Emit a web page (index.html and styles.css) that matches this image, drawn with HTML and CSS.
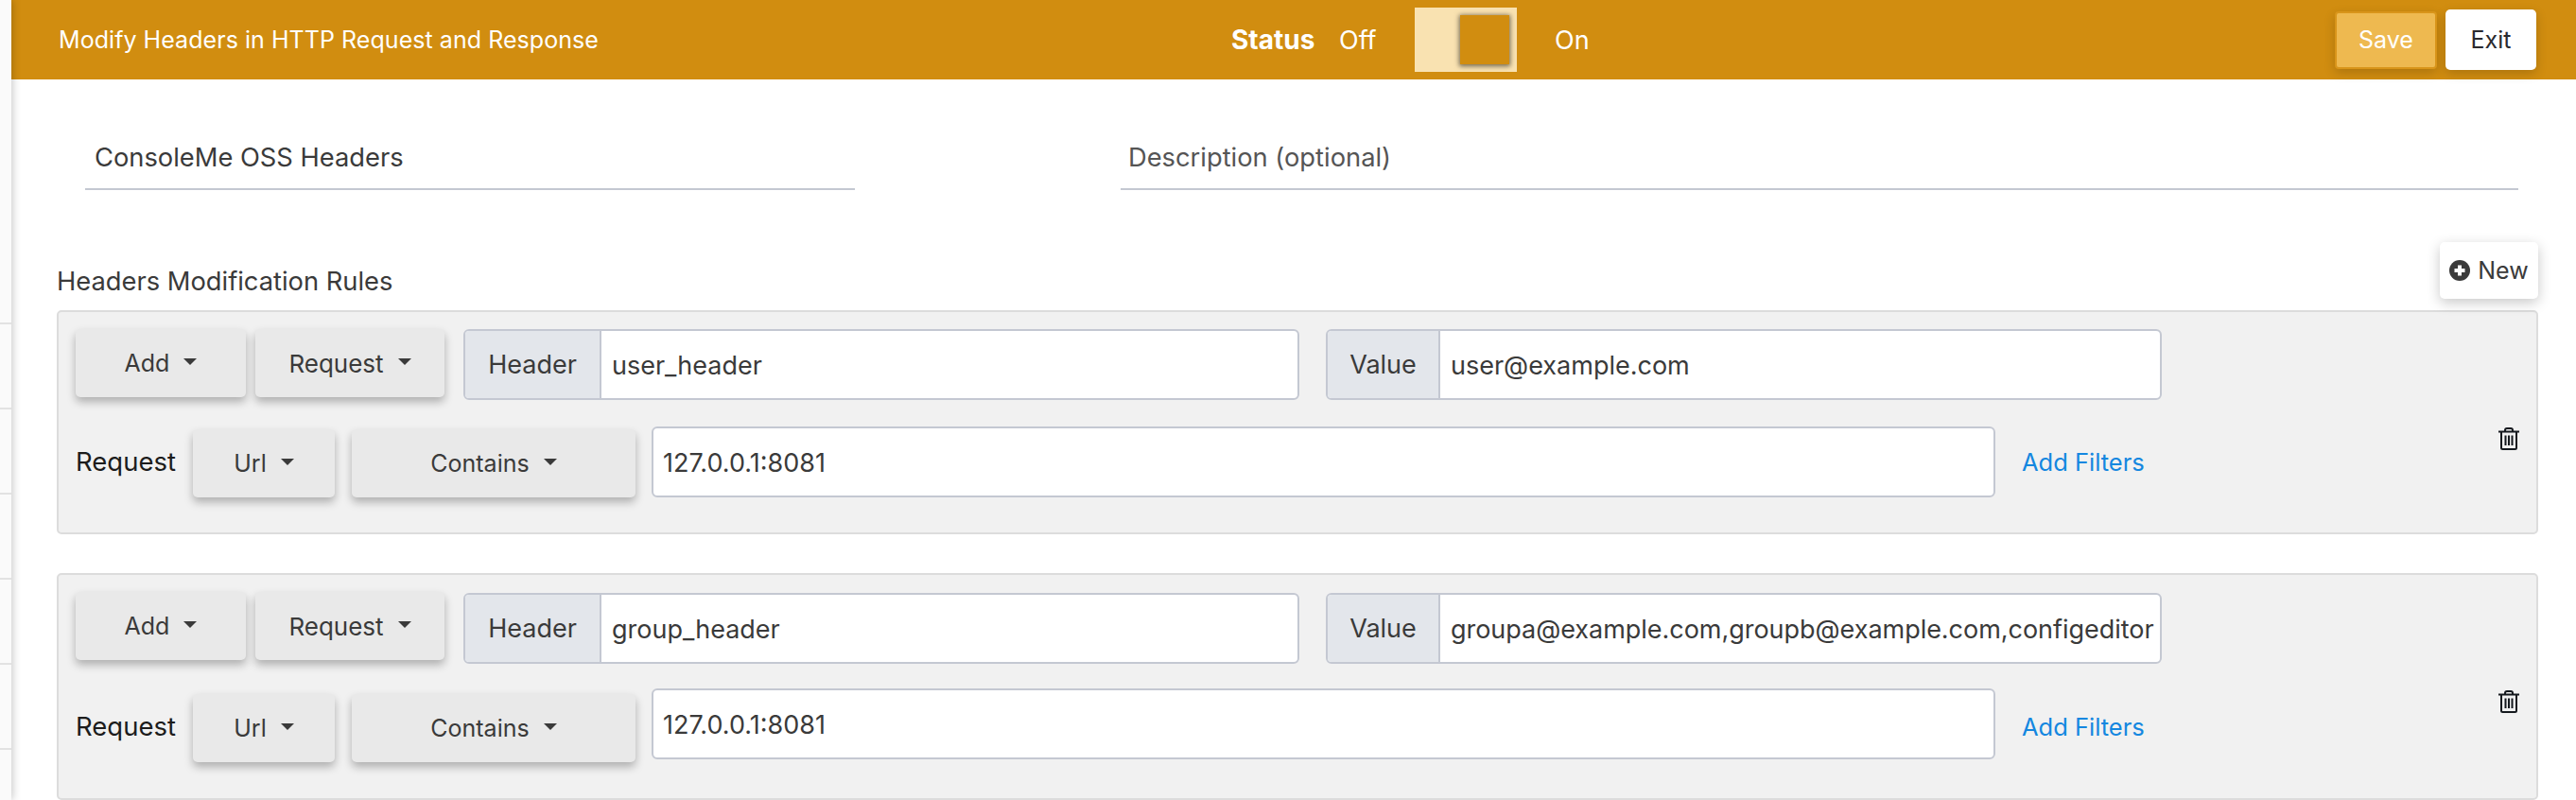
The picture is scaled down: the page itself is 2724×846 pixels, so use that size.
FILE: index.html
```html
<!DOCTYPE html>
<html lang="en">
<head>
<meta charset="utf-8">
<title>Modify Headers</title>
<link rel="stylesheet" href="styles.css">
</head>
<body>
<div class="page">
  <aside class="sidebar">
    <div class="side-row side-first"></div>
    <div class="side-row"></div>
    <div class="side-row"></div>
    <div class="side-row"></div>
    <div class="side-row"></div>
    <div class="side-row"></div>
  </aside>
  <main class="main">
    <header class="topbar">
      <div class="title">Modify Headers in HTTP Request and Response</div>
      <div class="status">
        <span class="status-label">Status</span>
        <span class="status-off">Off</span>
        <span class="toggle"><span class="knob"></span></span>
        <span class="status-on">On</span>
      </div>
      <div class="actions">
        <button class="btn-save">Save</button>
        <button class="btn-exit">Exit</button>
      </div>
    </header>

    <section class="meta">
      <div class="field field-name">ConsoleMe OSS Headers</div>
      <div class="field field-desc">Description (optional)</div>
    </section>

    <section class="rules-head">
      <div class="rules-title">Headers Modification Rules</div>
      <button class="btn-new">
        <svg class="plus" viewBox="0 0 22 22"><circle cx="11" cy="11" r="11" fill="#3a3a3a"/><path d="M11 5.5v11M5.5 11h11" stroke="#fff" stroke-width="4"/></svg>
        New
      </button>
    </section>

    <section class="panel panel-one">
      <div class="rows">
        <div class="row-top">
          <button class="dd dd-add">Add<i class="caret"></i></button>
          <button class="dd dd-req">Request<i class="caret"></i></button>
          <div class="group group-header"><span class="addon addon-header">Header</span><div class="val">user_header</div></div>
          <div class="group group-value"><span class="addon addon-value">Value</span><div class="val">user@example.com</div></div>
        </div>
        <div class="row-bottom">
          <span class="cond">Request</span>
          <button class="dd dd-url">Url<i class="caret"></i></button>
          <button class="dd dd-contains">Contains<i class="caret"></i></button>
          <div class="group group-url"><div class="val">127.0.0.1:8081</div></div>
          <a class="filters">Add Filters</a>
        </div>
      </div>
      <svg class="trash" viewBox="0 0 22 24" fill="none" stroke="#15191e" stroke-width="2"><path d="M0 4.5h22M7 4.5V3a2 2 0 0 1 2-2h4a2 2 0 0 1 2 2v1.500M3 4.5v17a1.500 1.500 0 0 0 1.500 1.500h13a1.500 1.500 0 0 0 1.500-1.500v-17M7.500 8.500v10.500M11 8.500v10.500M14.500 8.500v10.500"/></svg>
    </section>

    <section class="panel panel-two">
      <div class="rows">
        <div class="row-top">
          <button class="dd dd-add">Add<i class="caret"></i></button>
          <button class="dd dd-req">Request<i class="caret"></i></button>
          <div class="group group-header"><span class="addon addon-header">Header</span><div class="val">group_header</div></div>
          <div class="group group-value"><span class="addon addon-value">Value</span><div class="val val-long">groupa@example.com,groupb@example.com,configeditor</div></div>
        </div>
        <div class="row-bottom">
          <span class="cond">Request</span>
          <button class="dd dd-url">Url<i class="caret"></i></button>
          <button class="dd dd-contains">Contains<i class="caret"></i></button>
          <div class="group group-url"><div class="val">127.0.0.1:8081</div></div>
          <a class="filters">Add Filters</a>
        </div>
      </div>
      <svg class="trash" viewBox="0 0 22 24" fill="none" stroke="#15191e" stroke-width="2"><path d="M0 4.5h22M7 4.5V3a2 2 0 0 1 2-2h4a2 2 0 0 1 2 2v1.500M3 4.5v17a1.500 1.500 0 0 0 1.500 1.500h13a1.500 1.500 0 0 0 1.500-1.500v-17M7.500 8.500v10.500M11 8.500v10.500M14.500 8.500v10.500"/></svg>
    </section>
  </main>
</div>
</body>
</html>
```
FILE: styles.css
```css
* { box-sizing: border-box; }
html, body { margin: 0; padding: 0; background: #fff; }
body { font-family: Inter, "Liberation Sans", sans-serif; font-size: 27px; color: #3a3a3a; }
button { font: inherit; cursor: pointer; }

.page { display: flex; width: 2724px; height: 846px; overflow: hidden; }

.sidebar { width: 12px; flex: none; background: #fafafa; box-shadow: 2px 0 8px rgba(0,0,0,.2); position: relative; z-index: 2; }
.side-row { height: 90px; border-bottom: 2px solid #e2e2e2; }
.side-first { height: 343px; }

.main { flex: 1; min-width: 0; }

.topbar { height: 84px; background: #d18d10; color: #fff; display: grid; grid-template-columns: 1240px auto 1fr; align-items: center; padding: 0 42px 0 50px; }
.title { font-size: 25px; letter-spacing: .05px; }
.status { display: flex; align-items: center; }
.status-label { font-weight: 700; width: 114px; font-size: 28px; }
.status-off { width: 80px; }
.toggle { width: 108px; height: 68px; background: #f9e2b1; display: flex; align-items: center; padding-left: 48px; margin-right: 40px; }
.knob { width: 52px; height: 52px; background: #d18d10; box-shadow: 0 1px 5px 1px rgba(0,0,0,.55); }
.actions { display: flex; justify-content: flex-end; align-items: center; gap: 9px; font-size: 25px; }
.btn-save { width: 108px; height: 61px; background: #eeb950; color: #fff; border: 2px solid #d9951a; border-radius: 4px; box-shadow: 0 4px 12px rgba(0,0,0,.18); padding: 0; }
.btn-exit { width: 96px; height: 64px; background: #fff; color: #2a2a2e; border: 0; border-radius: 5px; box-shadow: 0 4px 12px rgba(0,0,0,.18); padding: 0; }

.meta { display: flex; padding: 47px 0 0 78px; gap: 281px; }
.field { height: 70px; border-bottom: 2px solid #c4c8d2; display: flex; align-items: center; padding: 3px 0 0 10px; font-size: 27.3px; }
.field-name { width: 814px; }
.field-desc { width: 1478px; padding-left: 8px; color: #555; }

.rules-head { display: flex; justify-content: space-between; align-items: flex-end; margin-top: 55px; padding: 0 40px 0 48px; }
.rules-title { line-height: 30px; margin-bottom: 3px; font-size: 27.3px; }
.btn-new { width: 104px; height: 60px; background: #fff; border: 0; border-radius: 5px; box-shadow: 0 4px 14px rgba(0,0,0,.22); display: flex; align-items: center; justify-content: center; gap: 8px; padding: 0; color: #3a3a3a; font-size: 25px; }
.plus { width: 22px; height: 22px; flex: none; }

.panel { margin: 0 40px 0 48px; background: #f1f1f1; border: 2px solid #dcdcdc; border-radius: 5px; display: flex; }
.panel-one { height: 237px; margin-top: 12px; padding: 18px 0 0 18px; }
.panel-two { height: 240px; margin-top: 41px; padding: 18px 0 0 18px; }
.rows { width: 2562px; flex: none; }
.row-top { display: flex; align-items: flex-start; }
.row-bottom { display: flex; align-items: flex-start; margin-top: 28px; }
.panel-two .row-top .group { margin-top: 1px; }
.panel-two .row-bottom { margin-top: 26px; }

.dd { height: 72px; background: #e9e9e9; color: #3a3a3a; border: 0; border-radius: 5px; box-shadow: 0 5px 10px rgba(0,0,0,.28); display: inline-flex; align-items: center; justify-content: center; padding: 0; flex: none; font-size: 25px; }
.caret { width: 0; height: 0; border: 7px solid transparent; border-top: 7.500px solid #3a3a3a; border-bottom: 0; margin: -3px 0 0 15px; }
.dd-add { width: 180px; }
.dd-req { width: 200px; margin-left: 10px; font-size: 26px; }
.dd-url { width: 150px; margin-top: 3px; }
.dd-contains { width: 300px; margin: 3px 0 0 18px; }
.panel-two .dd-url, .panel-two .dd-contains { margin-top: 6px; }

.group { height: 75px; background: #fff; border: 2px solid #c4c8d2; border-radius: 6px; display: flex; align-items: center; overflow: hidden; flex: none; }
.group-header { width: 884px; margin-left: 20px; }
.group-value { width: 884px; margin-left: 28px; }
.group-url { width: 1421px; margin-left: 17px; }
.addon { height: 100%; background: #e3e6eb; border-right: 2px solid #c4c8d2; display: flex; align-items: center; justify-content: center; flex: none; }
.addon-header { width: 144px; }
.addon-value { width: 119px; }
.val { flex: 1; min-width: 0; padding: 1px 11px 0; white-space: nowrap; overflow: hidden; }
.val-long { padding-right: 0; letter-spacing: -.03px; }
.group-url .val { padding-left: 10px; }

.cond { width: 124px; flex: none; color: #1c1c1c; line-height: 75px; font-size: 27.5px; }
.panel-two .cond { line-height: 80px; }
.filters { color: #1487e0; margin: 22px 0 0 28px; line-height: 32px; font-size: 25.5px; }
.panel-two .filters { margin-top: 25px; }

.trash { width: 22px; height: 24px; margin: 104px 0 0 0; flex: none; }
```
